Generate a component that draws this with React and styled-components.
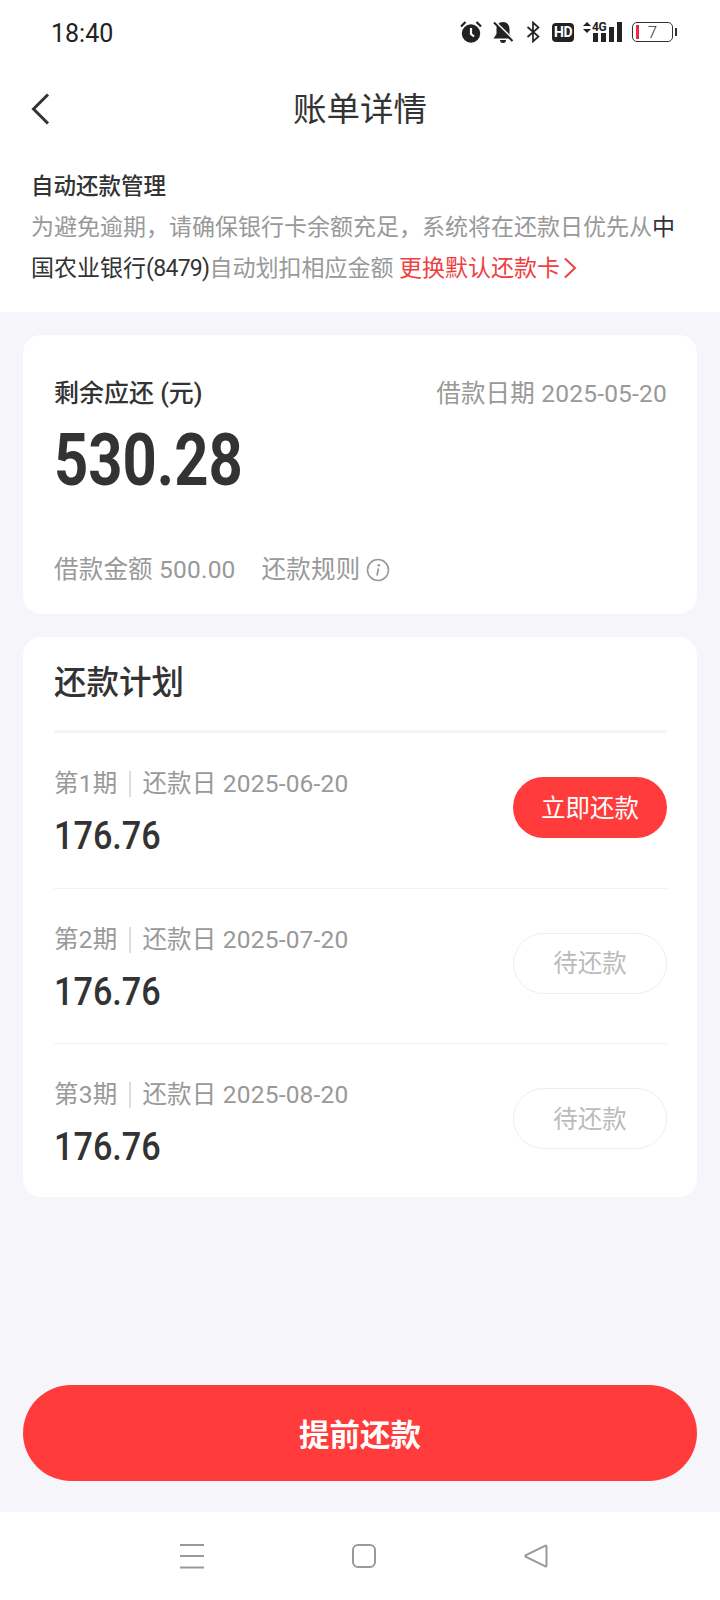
import React from 'react';
import styled, { createGlobalStyle } from 'styled-components';

const GlobalStyle = createGlobalStyle`
    * {
        box-sizing: border-box;
    }

    html, body {
        margin: 0;
        padding: 0;
        background: #ffffff;
    }

    body {
        font-family: Roboto, "Noto Sans CJK SC", sans-serif;
        color: #333333;
    }
`;

const plans = [
    { id: 1, date: '2025-06-20', amount: '176.76', active: true },
    { id: 2, date: '2025-07-20', amount: '176.76', active: false },
    { id: 3, date: '2025-08-20', amount: '176.76', active: false },
];

function StatusIcons() {
    return (
        <Icons>
            {/* alarm */}
            <svg width="22" height="22" viewBox="0 0 22 22">
                <circle cx="11" cy="12.5" r="9.2" fill="#222" />
                <path d="M11 7v6l3 2.500" stroke="#fff" strokeWidth="2.200" fill="none" />
                <path d="M1 5.500 5.500 1M21 5.500 16.500 1" stroke="#222" strokeWidth="2.200" fill="none" />
            </svg>
            {/* muted bell */}
            <svg width="22" height="22" viewBox="0 0 22 22">
                <path d="M11 1C6.500 1 4.500 4.500 4.500 8v5L1.500 17.500h19L17.500 13V8C17.500 4.500 15.500 1 11 1z" fill="#222" />
                <path d="M8 19h6a3 3 0 0 1-6 0z" fill="#222" />
                <path d="M3.500 1l18 18" stroke="#fff" strokeWidth="2" fill="none" />
                <path d="M2 1.500l18.500 18.500" stroke="#222" strokeWidth="2" fill="none" />
            </svg>
            {/* bluetooth */}
            <BluetoothIcon width="14" height="22" viewBox="0 0 14 22">
                <path d="M1.500 6l11 9.500L7 20.500V1.500L12.500 6.500 1.500 16" stroke="#222" strokeWidth="1.700" fill="none" />
            </BluetoothIcon>
            <HdBadge>HD</HdBadge>
            <Network>
                <svg width="10" height="16" viewBox="0 0 10 16">
                    <path d="M5 1l4 4H1zM1 8h8l-4 4z" fill="#222" />
                </svg>
                <NetworkLabel>4G</NetworkLabel>
                <Bars>
                    <Bar $h={9} />
                    <Bar $h={9} />
                    <Bar $h={15} />
                    <Bar $h={20} />
                </Bars>
            </Network>
            <Battery>
                <BatteryLevel />
                <BatteryText>7</BatteryText>
                <BatteryTip />
            </Battery>
        </Icons>
    );
}

function App() {
    return (
        <>
            <GlobalStyle />
            <Page>
                <StatusBar>
                    <Time>18:40</Time>
                    <StatusIcons />
                </StatusBar>

                <NavBar>
                    <BackIcon width="20" height="32" viewBox="0 0 20 32">
                        <path d="M17 1.500 2.500 16 17 30.500" stroke="#333" strokeWidth="3" fill="none" />
                    </BackIcon>
                    <Title>账单详情</Title>
                </NavBar>

                <Notice>
                    <NoticeTitle>自动还款管理</NoticeTitle>
                    <NoticeText>
                        为避免逾期，请确保银行卡余额充足，系统将在还款日优先从<Strong>中</Strong>
                        <br />
                        <Strong>国农业银行</Strong><BankDigits>(8479)</BankDigits>自动划扣相应金额{' '}
                        <NoticeLink>
                            更换默认还款卡
                            <svg width="16" height="22" viewBox="0 0 16 22">
                                <path d="M3 1.500 13 11 3 20.500" stroke="#ee3f42" strokeWidth="2" fill="none" />
                            </svg>
                        </NoticeLink>
                    </NoticeText>
                </Notice>

                <Main>
                    <SummaryCard>
                        <SummaryTop>
                            <SummaryLabel>剩余应还 (元)</SummaryLabel>
                            <Muted>借款日期 2025-05-20</Muted>
                        </SummaryTop>
                        <Amount>530.28</Amount>
                        <SummaryBottom>
                            <Muted>借款金额 500.00</Muted>
                            <RuleLink>
                                还款规则
                                <svg width="24" height="24" viewBox="0 0 24 24">
                                    <circle cx="12" cy="12" r="10.500" stroke="#999" strokeWidth="1.600" fill="none" />
                                    <circle cx="12.800" cy="7.300" r="1.300" fill="#999" />
                                    <path d="M12.500 10.500 11 17.500" stroke="#999" strokeWidth="1.800" fill="none" />
                                </svg>
                            </RuleLink>
                        </SummaryBottom>
                    </SummaryCard>

                    <PlanCard>
                        <PlanTitle>还款计划</PlanTitle>
                        {plans.map((plan) => (
                            <PlanRow key={plan.id}>
                                <div>
                                    <PlanMeta>
                                        <span>第{plan.id}期</span>
                                        <MetaDivider />
                                        <span>还款日 {plan.date}</span>
                                    </PlanMeta>
                                    <PlanAmount>{plan.amount}</PlanAmount>
                                </div>
                                <PlanButton $active={plan.active}>
                                    {plan.active ? '立即还款' : '待还款'}
                                </PlanButton>
                            </PlanRow>
                        ))}
                    </PlanCard>

                    <PrepayButton>提前还款</PrepayButton>
                </Main>

                <SystemNav>
                    <svg width="26" height="26" viewBox="0 0 26 26">
                        <path d="M1 2h24M1 13h24M1 24.500h24" stroke="#999" strokeWidth="2" fill="none" />
                    </svg>
                    <svg width="26" height="26" viewBox="0 0 26 26">
                        <rect x="2" y="2" width="22" height="22" rx="5" stroke="#999" strokeWidth="2" fill="none" />
                    </svg>
                    <svg width="26" height="26" viewBox="0 0 26 26">
                        <path d="M23.500 3.500v19c0 1-.800 1.300-1.600.700L3 14c-.900-.600-.900-1.400 0-2L21.900 2.800c.800-.500 1.600-.300 1.600.700z" stroke="#999" strokeWidth="2" fill="none" />
                    </svg>
                </SystemNav>
            </Page>
        </>
    );
}

const Page = styled.div`
    width: 720px;
    height: 1600px;
    display: flex;
    flex-direction: column;
    background: #ffffff;
    overflow: hidden;
`;

const StatusBar = styled.div`
    height: 64px;
    flex: none;
    display: flex;
    align-items: center;
    justify-content: space-between;
    padding: 0 47px 0 51px;
`;

const Time = styled.span`
    margin-top: 2px;
    font-size: 25px;
    color: #222222;
`;

const Icons = styled.div`
    display: flex;
    align-items: center;
    gap: 10px;
`;

const BluetoothIcon = styled.svg`
    margin-left: 2px;
`;

const HdBadge = styled.span`
    width: 22px;
    height: 19px;
    margin: 0 -2px 0 2px;
    border-radius: 4px;
    background: #222222;
    color: #ffffff;
    font-size: 14px;
    font-weight: 700;
    line-height: 19px;
    text-align: center;
    letter-spacing: -0.5px;
`;

const Network = styled.div`
    display: flex;
    align-items: flex-start;
    height: 22px;
    position: relative;
    width: 40px;
`;

const NetworkLabel = styled.span`
    position: absolute;
    left: 10px;
    top: 0;
    font-size: 12px;
    font-weight: 700;
    line-height: 12px;
    letter-spacing: -0.5px;
    color: #222222;
`;

const Bars = styled.div`
    position: absolute;
    right: 0;
    bottom: 1px;
    display: flex;
    align-items: flex-end;
    gap: 3px;
`;

const Bar = styled.i`
    display: block;
    width: 5px;
    height: ${(props) => props.$h}px;
    background: #222222;
`;

const Battery = styled.div`
    position: relative;
    width: 41px;
    height: 20px;
    border: 1.5px solid #333333;
    border-radius: 5px;
    display: flex;
    align-items: center;
    justify-content: center;
`;

const BatteryLevel = styled.i`
    position: absolute;
    left: 3px;
    top: 2px;
    bottom: 2px;
    width: 3px;
    background: #e8284f;
`;

const BatteryText = styled.span`
    font-size: 17px;
    line-height: 17px;
    font-weight: 300;
    color: #333333;
`;

const BatteryTip = styled.i`
    position: absolute;
    right: -5px;
    top: 5px;
    width: 2px;
    height: 8px;
    background: #333333;
`;

const NavBar = styled.div`
    position: relative;
    height: 88px;
    flex: none;
    display: flex;
    align-items: center;
    justify-content: center;
    padding-top: 4px;
`;

const BackIcon = styled.svg`
    position: absolute;
    left: 31px;
    top: 29px;
`;

const Title = styled.h1`
    margin: 0;
    font-size: 33.500px;
    font-weight: 400;
    line-height: 84px;
    color: #333333;
`;

const Notice = styled.div`
    flex: none;
    height: 160px;
    padding: 16px 31px 0;
`;

const NoticeTitle = styled.div`
    font-size: 22.500px;
    font-weight: 500;
    line-height: 36px;
    color: #333333;
`;

const NoticeText = styled.p`
    margin: 3px 0 0;
    font-size: 23px;
    line-height: 41px;
    white-space: nowrap;
    color: #999999;
`;

const Strong = styled.span`
    color: #333333;
`;

const BankDigits = styled(Strong)`
    letter-spacing: -0.7px;
`;

const NoticeLink = styled.span`
    color: #ee3f42;

    svg {
        vertical-align: -3px;
        margin-left: 2px;
    }
`;

const Main = styled.main`
    flex: 1;
    display: flex;
    flex-direction: column;
    gap: 23px;
    padding: 23px 23px 31px;
    background: #f5f5fa;
`;

const Card = styled.section`
    background: #ffffff;
    border-radius: 18px;
    padding: 0 30px 0 31px;
`;

const SummaryCard = styled(Card)`
    padding-top: 41px;
    padding-bottom: 26px;
`;

const SummaryTop = styled.div`
    display: flex;
    justify-content: space-between;
    line-height: 36px;
`;

const SummaryLabel = styled.span`
    font-size: 25px;
    font-weight: 500;
    color: #333333;
`;

const Muted = styled.span`
    font-size: 24.500px;
    letter-spacing: 0.2px;
    color: #999999;
`;

const Amount = styled.div`
    margin-top: 9px;
    font-size: 72px;
    font-weight: 700;
    line-height: 80px;
    color: #333333;
    transform: scaleX(0.83);
    transform-origin: left center;
`;

const SummaryBottom = styled.div`
    display: flex;
    align-items: center;
    gap: 26px;
    margin-top: 51px;
    line-height: 36px;
`;

const RuleLink = styled(Muted)`
    display: flex;
    align-items: center;
    gap: 6px;
`;

const PlanCard = styled(Card)`
    padding-top: 26px;
`;

const PlanTitle = styled.h2`
    margin: 0;
    padding-bottom: 27px;
    border-bottom: 3px solid #f4f4f6;
    font-size: 32.500px;
    font-weight: 500;
    line-height: 40px;
    color: #333333;
`;

const PlanRow = styled.div`
    display: flex;
    align-items: center;
    justify-content: space-between;
    padding: 33px 0 32.500px;
    border-bottom: 1px solid #f2f2f4;

    &:last-child {
        padding-bottom: 31px;
        border-bottom: none;
    }
`;

const PlanMeta = styled.div`
    display: flex;
    align-items: center;
    font-size: 24.500px;
    line-height: 36px;
    letter-spacing: 0.2px;
    color: #999999;
`;

const MetaDivider = styled.i`
    width: 2px;
    height: 26px;
    margin: 0 11px 0 12px;
    background: #dddddd;
`;

const PlanAmount = styled.div`
    margin-top: 15px;
    font-size: 38px;
    font-weight: 500;
    line-height: 38px;
    color: #333333;
    transform: scaleX(0.9);
    transform-origin: left center;
`;

const PlanButton = styled.button`
    width: 154px;
    height: 61px;
    margin-bottom: 6px;
    border-radius: 31px;
    border: ${(props) => (props.$active ? 'none' : '1px solid #eeeeee')};
    background: ${(props) => (props.$active ? '#ff3b3b' : '#ffffff')};
    color: ${(props) => (props.$active ? '#ffffff' : '#bbbbbb')};
    font-family: inherit;
    font-size: 24.500px;
    padding: 0 0 3px;
`;

const PrepayButton = styled.button`
    margin-top: auto;
    height: 96px;
    flex: none;
    border: none;
    border-radius: 48px;
    background: #ff3b3b;
    color: #ffffff;
    font-family: inherit;
    font-size: 30.500px;
    font-weight: 700;
`;

const SystemNav = styled.nav`
    height: 88px;
    flex: none;
    display: flex;
    align-items: center;
    justify-content: center;
    gap: 146px;
    padding-left: 8px;
    background: #ffffff;
`;

export default App;
